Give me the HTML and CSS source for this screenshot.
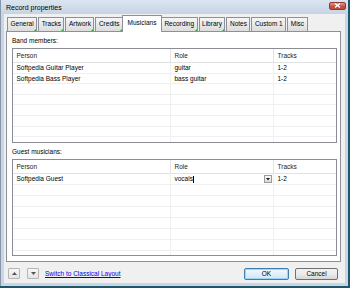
FILE: index.html
```html
<!DOCTYPE html>
<html>
<head>
<meta charset="utf-8">
<title>Record properties</title>
<link rel="stylesheet" href="styles.css">
</head>
<body>
<div class="win">
  <div class="titlebar">
    <span class="title">Record properties</span>
    <span class="close"><svg width="7" height="5" viewBox="0 0 7 5"><path d="M1 0.5L6 4.5M6 0.5L1 4.5" stroke="#fff" stroke-width="1.3"/></svg></span>
  </div>
  <div class="client">
    <div class="tabs">
      <div class="tab has">General</div>
      <div class="tab has">Tracks</div>
      <div class="tab has">Artwork</div>
      <div class="tab has">Credits</div>
      <div class="tab sel">Musicians</div>
      <div class="tab has">Recording</div>
      <div class="tab has">Library</div>
      <div class="tab">Notes</div>
      <div class="tab">Custom 1</div>
      <div class="tab">Misc</div>
    </div>
    <div class="panel">
      <div class="label">Band members:</div>
      <div class="list band">
        <div class="row head"><div class="cell">Person</div><div class="cell">Role</div><div class="cell">Tracks</div></div>
        <div class="row"><div class="cell">Softpedia Guitar Player</div><div class="cell">guitar</div><div class="cell">1-2</div></div>
        <div class="row"><div class="cell">Softpedia Bass Player</div><div class="cell">bass guitar</div><div class="cell">1-2</div></div>
        <div class="row"><div class="cell"></div><div class="cell"></div><div class="cell"></div></div>
        <div class="row"><div class="cell"></div><div class="cell"></div><div class="cell"></div></div>
        <div class="row"><div class="cell"></div><div class="cell"></div><div class="cell"></div></div>
        <div class="row"><div class="cell"></div><div class="cell"></div><div class="cell"></div></div>
        <div class="row"><div class="cell"></div><div class="cell"></div><div class="cell"></div></div>
        <div class="row"><div class="cell"></div><div class="cell"></div><div class="cell"></div></div>
      </div>
      <div class="label second">Guest musicians:</div>
      <div class="list guest">
        <div class="row head"><div class="cell">Person</div><div class="cell">Role</div><div class="cell">Tracks</div></div>
        <div class="row"><div class="cell">Softpedia Guest</div><div class="cell editor"><span>vocals</span><span class="caret"></span><span class="drop"><svg width="4" height="3" viewBox="0 0 4 3"><path d="M0 0H4L2 2.5Z" fill="#222"/></svg></span></div><div class="cell">1-2</div></div>
        <div class="row"><div class="cell"></div><div class="cell"></div><div class="cell"></div></div>
        <div class="row"><div class="cell"></div><div class="cell"></div><div class="cell"></div></div>
        <div class="row"><div class="cell"></div><div class="cell"></div><div class="cell"></div></div>
        <div class="row"><div class="cell"></div><div class="cell"></div><div class="cell"></div></div>
        <div class="row"><div class="cell"></div><div class="cell"></div><div class="cell"></div></div>
        <div class="row"><div class="cell"></div><div class="cell"></div><div class="cell"></div></div>
        <div class="row"><div class="cell"></div><div class="cell"></div><div class="cell"></div></div>
      </div>
    </div>
    <div class="footer">
      <span class="sbtn up"><svg width="5" height="3" viewBox="0 0 5 3"><path d="M0 3H5L2.5 0Z" fill="#555"/></svg></span>
      <span class="sbtn down"><svg width="5" height="3" viewBox="0 0 5 3"><path d="M0 0H5L2.5 3Z" fill="#555"/></svg></span>
      <a class="link" href="#">Switch to Classical Layout</a>
      <span class="btn ok">OK</span>
      <span class="btn cancel">Cancel</span>
    </div>
  </div>
</div>
</body>
</html>
```
FILE: styles.css
```css
html, body {
  margin: 0;
  padding: 0;
}
body {
  width: 350px;
  height: 288px;
  overflow: hidden;
  background: #1d5769;
  font-family: "Liberation Sans", Arial, sans-serif;
  font-size: 6.5px;
  color: #000;
}
.win {
  width: 348px;
  height: 286px;
  box-sizing: border-box;
  background: #c8d6e5;
  border-left: 1px solid #8797a9;
  padding: 0 3px 3px 3px;
  display: flex;
  flex-direction: column;
}
.titlebar {
  height: 14px;
  margin: 0 -3px;
  padding-left: 5px;
  display: flex;
  align-items: center;
  background: linear-gradient(#dbe5f0, #c6d4e4);
}
.title {
  font-size: 7px;
  color: #000;
  flex: 1;
}
.close {
  width: 17px;
  height: 8px;
  margin-right: 2px;
  margin-bottom: 3px;
  box-sizing: border-box;
  border: 1px solid #8c3a35;
  border-radius: 2px;
  background: linear-gradient(#e39a8d, #c9503f 55%, #c44a3a);
  display: flex;
  align-items: center;
  justify-content: center;
}
.close svg { display: block; }
.client {
  flex: 1;
  background: #f0f0f0;
  padding: 3px 4px 0 2px;
  display: flex;
  flex-direction: column;
}
.tabs {
  height: 14px;
  display: flex;
  align-items: flex-end;
  padding-left: 1px;
  position: relative;
  z-index: 1;
}
.tab {
  position: relative;
  height: 14px;
  box-sizing: border-box;
  border: 1px solid #8d9097;
  border-bottom: none;
  padding: 0 2.5px;
  margin-right: 1px;
  line-height: 12px;
  background: linear-gradient(#f6f6f6, #e9e9e9 50%, #dcdcdc);
  white-space: nowrap;
}
.tab.has::after {
  content: "";
  position: absolute;
  right: 0;
  bottom: 0;
  width: 0;
  height: 0;
  border-left: 2px solid transparent;
  border-bottom: 2px solid #1db31d;
}
.tab.sel {
  height: 17px;
  margin: 0 -1px -1px -2px;
  padding: 0 4.5px;
  background: #fff;
  line-height: 14px;
  z-index: 2;
}
.panel {
  height: 231px;
  box-sizing: border-box;
  border: 1px solid #8d9097;
  background: #fff;
  padding: 4px 3px 5px 5px;
}
.label {
  height: 10px;
  line-height: 10px;
  margin-bottom: 2px;
  color: #000;
}
.label.second {
  margin-top: 4px;
}
.list {
  box-sizing: border-box;
  border: 1px solid #8a8d94;
  overflow: hidden;
}
.list.band { height: 95px; }
.list.guest { height: 97px; }
.row {
  display: grid;
  grid-template-columns: 158px 103px 1fr;
  box-sizing: border-box;
  border-bottom: 1px solid #f0f0f0;
}
.band .row { height: 10.6px; line-height: 9.6px; }
.guest .row { height: 11px; line-height: 10px; }
.row .cell {
  padding-left: 3.5px;
  border-right: 1px solid #f0f0f0;
  white-space: nowrap;
  overflow: hidden;
}
.row .cell:last-child { border-right: none; }
.list .row.head {
  height: 14px;
  line-height: 13px;
  border-bottom: 1px solid #e2e2e2;
  color: #222;
}
.row.head .cell {
  border-right: 1px solid #e4e4e4;
}
.row.head .cell:last-child { border-right: none; }
.cell.editor {
  display: flex;
  align-items: center;
  padding-right: 1px;
}
.caret {
  width: 1px;
  height: 7px;
  background: #000;
  margin-left: 0.5px;
}
.drop {
  margin-left: auto;
  width: 8px;
  height: 8px;
  box-sizing: border-box;
  border: 1px solid #9a9a9a;
  background: linear-gradient(#f8f8f8, #dcdcdc);
  display: flex;
  align-items: center;
  justify-content: center;
}
.drop svg { display: block; }
.footer {
  height: 21px;
  box-sizing: border-box;
  padding: 6px 3px 0 2px;
  display: flex;
  align-items: flex-start;
}
.sbtn {
  width: 12px;
  height: 11px;
  box-sizing: border-box;
  border: 1px solid #b5b5b5;
  border-radius: 1px;
  background: linear-gradient(#f7f7f7, #e4e4e4);
  display: flex;
  align-items: center;
  justify-content: center;
}
.sbtn svg { display: block; }
.sbtn.up { margin-right: 7px; }
.link {
  margin-left: 6px;
  line-height: 11px;
  color: #0000ee;
  text-decoration: underline;
}
.btn {
  height: 12px;
  box-sizing: border-box;
  border-radius: 2px;
  line-height: 10px;
  text-align: center;
}
.btn.ok {
  margin-left: auto;
  width: 45px;
  border: 1px solid #3c7fb1;
  background: linear-gradient(#f2f9fd, #e2f0fa 50%, #cde7f7);
  box-shadow: inset 0 0 0 1px #9fd4f6;
}
.btn.cancel {
  margin-left: 6px;
  width: 43px;
  border: 1px solid #707070;
  background: linear-gradient(#f2f2f2, #ebebeb 50%, #d6d6d6);
}
```
